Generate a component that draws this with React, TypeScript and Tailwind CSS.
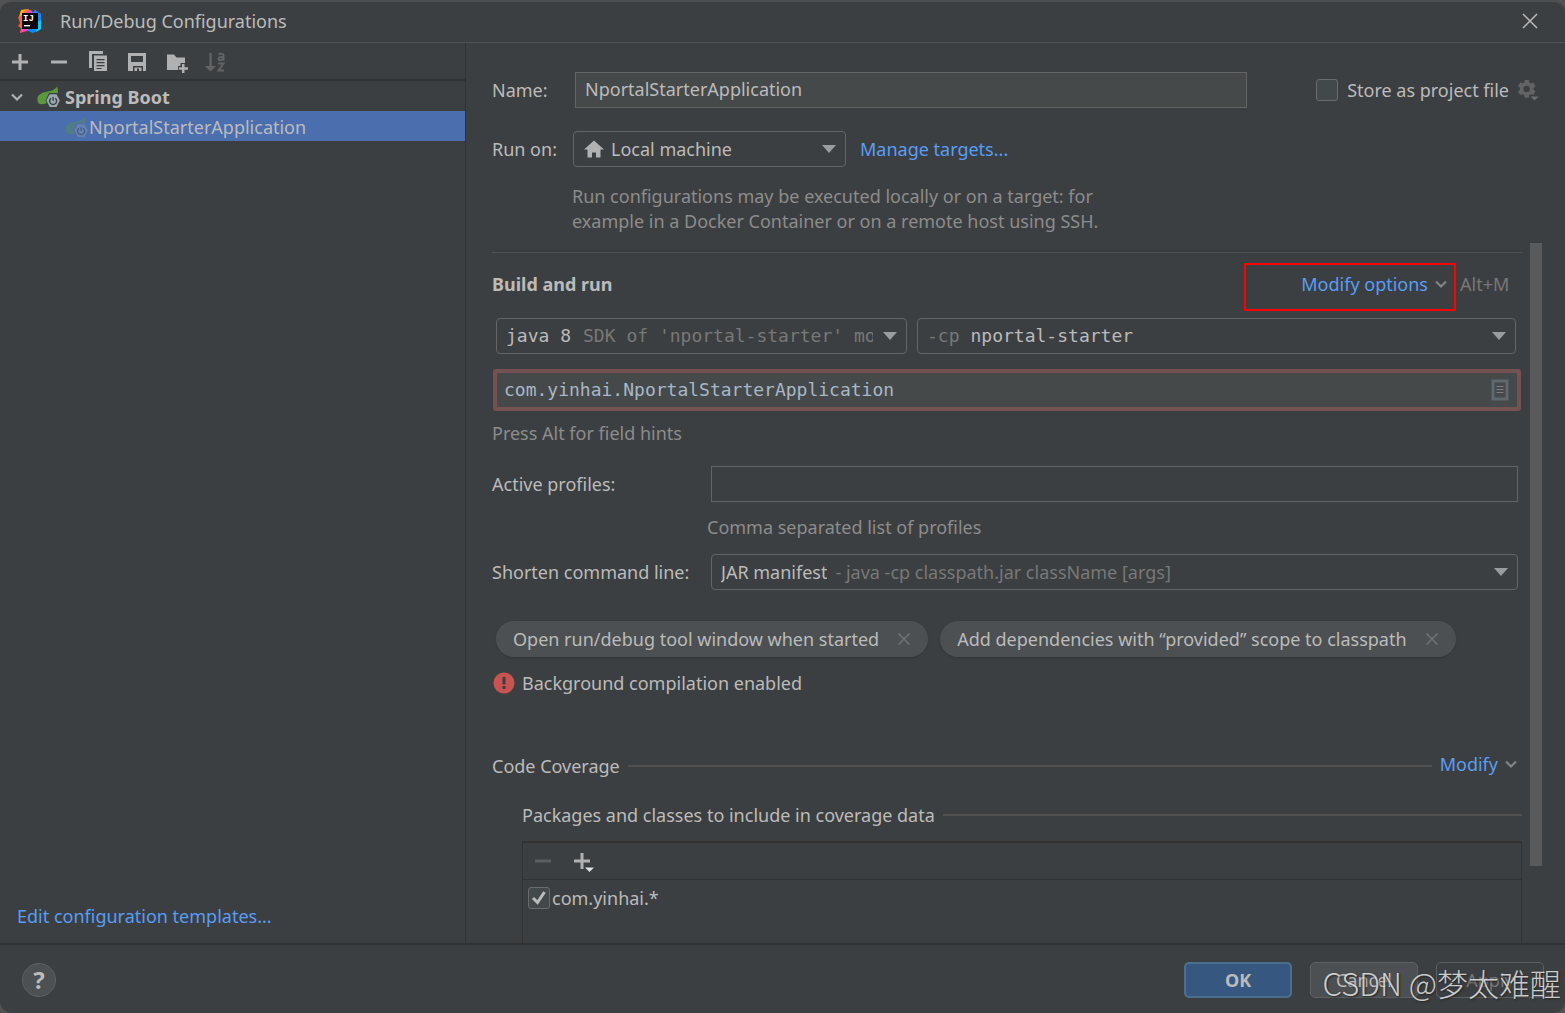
import type { ReactNode } from 'react';

interface IconProps {
  className?: string;
}

function AppLogo() {
  return (
    <svg viewBox="0 0 24 24" className="size-6" aria-hidden="true">
      <path d="M3 1l7-1 4 4-6 8-7-4z" fill="#fdb60d" />
      <path d="M0 8l8-4v16l-6 4 1-5-3-2 2-3z" fill="#fe5c3a" />
      <path d="M5 3l4-3 6 4 2 6-9 2z" fill="#fa6a4a" />
      <path d="M9 2l4-1 3 4-6 2z" fill="#e44fc0" />
      <path d="M14 4l3-3 6 4v15l-8 4-7-3 6-9z" fill="#078efc" />
      <path d="M15 4l2-3 6 4-3 6z" fill="#2f7df6" />
      <path d="M2 24l2-6h8l-3 4z" fill="#ff45a8" />
      <path d="M20 13l3-2v9l-5 3z" fill="#15c8fa" />
      <rect x="4" y="4" width="16" height="16" fill="#0b0508" />
      <text x="5" y="12" fill="#fff" fontSize="9" fontWeight="700" fontFamily="Liberation Mono, monospace">
        IJ
      </text>
      <rect x="6" y="16" width="6" height="1.4" fill="#fff" />
    </svg>
  );
}

function PlusIcon({ className = '' }: IconProps) {
  return (
    <svg viewBox="0 0 24 24" className={`size-6 ${className}`} fill="currentColor" aria-hidden="true">
      <path d="M10.500 4h3v6.500H20v3h-6.500V20h-3v-6.500H4v-3h6.500z" />
    </svg>
  );
}

function MinusIcon({ className = '' }: IconProps) {
  return (
    <svg viewBox="0 0 24 24" className={`size-6 ${className}`} fill="currentColor" aria-hidden="true">
      <path d="M4 10.500h16v3H4z" />
    </svg>
  );
}

function PlusMenuIcon() {
  return (
    <svg viewBox="0 0 24 24" className="size-6" fill="currentColor" aria-hidden="true">
      <path d="M9.500 4h3v6.500H19v3h-6.500V20h-3v-6.500H3v-3h6.500z" />
      <path d="M14 18.500h9l-4.500 4.500z" fill="#e0e0e0" />
    </svg>
  );
}

function CopyIcon() {
  return (
    <svg viewBox="0 0 24 24" className="size-6" fill="currentColor" aria-hidden="true">
      <path d="M3 1h14v3H6v14H3z" />
      <path
        fillRule="evenodd"
        d="M8 5.500h13V21H8zM10.500 9v1.200h8V9zm0 3v1.200h8V12zm0 3v1.200h8V15zm0 3v1h5v-1z"
      />
    </svg>
  );
}

function SaveIcon() {
  return (
    <svg viewBox="0 0 24 24" className="size-6" fill="currentColor" aria-hidden="true">
      <path fillRule="evenodd" d="M3 3h18v18h-3v-5H8v5H3zM6 6v6h12V6z" />
      <path d="M9.500 17.500h7V21H14v-2.500h-2V21H9.500z" />
    </svg>
  );
}

function FolderPlusIcon() {
  return (
    <svg viewBox="0 0 24 24" className="size-6" fill="currentColor" aria-hidden="true">
      <path d="M3 4.500h7l2.500 3H21V13h-4.500v3H14v4H3z" />
      <path d="M18 14h2.500v3.200H24v2.500h-3.500V23H18v-3.300h-3.200v-2.500H18z" />
    </svg>
  );
}

function SortIcon() {
  return (
    <svg viewBox="0 0 24 24" className="size-6" fill="currentColor" aria-hidden="true">
      <path d="M6.400 3h2.300v13h4.300l-5.500 5.500L2 16h4.400z" />
      <path
        d="M15.500 4.500c2-1.200 5-1 5 1.200v5M20.500 7c-3-.3-5 .3-5 2s3.500 1.800 5-.3M15 13.500h5.500l-5 7H21"
        fill="none"
        stroke="currentColor"
        strokeWidth="2"
      />
    </svg>
  );
}

function SpringIcon({ className = '' }: IconProps) {
  return (
    <svg viewBox="0 0 24 24" className={`size-6 shrink-0 ${className}`} aria-hidden="true">
      <path
        d="M21 1.500C19.500 4 17 5.500 12 6.500 5 7.500 1.300 10 1.300 14.500c0 3 1.700 4.700 4 4.700 3.500 0 5-.7 6.700-1.700l3-8.500 6.800-.5c.4-2.500 0-5-.8-7z"
        fill="#59983b"
      />
      <path d="M13 8h8.500l3.500 7.500-3.500 7.500H13l-3.500-7.500z" fill="#3c3f41" className="spring-gap" />
      <path d="M13.700 9.300h6.800l3.300 6.300-3.300 6.400h-6.800l-3.300-6.400z" fill="#9aa7b0" />
      <path d="M15 13.200a3.500 3.500 0 1 0 4.200 0M17.100 12v3.800" fill="none" stroke="#3c3f41" strokeWidth="1.400" />
    </svg>
  );
}

function ChevronIcon({ className = '' }: IconProps) {
  return (
    <svg viewBox="0 0 14 14" className={className} fill="none" stroke="currentColor" aria-hidden="true">
      <path d="M2 4.500l5 5 5-5" strokeWidth="2.200" />
    </svg>
  );
}

function HomeIcon() {
  return (
    <svg viewBox="0 0 22 20" className="h-5 w-[22px] shrink-0 text-[#afb1b3]" fill="currentColor" aria-hidden="true">
      <path d="M11 1.500l10 9h-3.500v8H13v-5H9v5H4.500v-8H1z" />
    </svg>
  );
}

function GearIcon() {
  return (
    <svg viewBox="0 0 22 22" className="size-[22px]" aria-hidden="true">
      <path
        fill="currentColor"
        fillRule="evenodd"
        d="M7.700 1h4.100l.5 2.600 1.600.9 2.500-.9 2.100 3.600-2 1.700v1.900l2 1.700-2.100 3.500-2.500-.8-1.600.9-.5 2.700H7.700l-.5-2.700-1.600-.9-2.500.8L1 12.500l2-1.700V8.900L1 7.200l2.100-3.600 2.500.9 1.600-.9zM9.700 6.700a3.200 3.200 0 1 0 0 6.400 3.200 3.200 0 0 0 0-6.400z"
      />
      <path d="M13.500 17.500h8l-4 4z" fill="#6e6e6e" />
    </svg>
  );
}

function ListIcon() {
  return (
    <svg viewBox="0 0 18 22" className="h-[22px] w-[18px]" fill="none" aria-hidden="true">
      <rect x="2" y="2" width="14" height="18" stroke="#5f686c" strokeWidth="3" />
      <path d="M5.500 7.500h7M5.500 10.500h7M5.500 13.500h7" stroke="#7b7f80" strokeWidth="1" />
    </svg>
  );
}

function ErrorIcon() {
  return (
    <svg viewBox="0 0 22 22" className="size-[22px]" aria-hidden="true">
      <circle cx="11" cy="11" r="10.500" fill="#c75450" />
      <path d="M9.500 5h3v7.500h-3zM9.500 14h3v3h-3z" fill="#3c3f41" />
    </svg>
  );
}

interface ComboBoxProps {
  label: string;
  value: string;
  icon?: ReactNode;
  before?: string;
  after?: string;
  className?: string;
}

// The select shows the value only, the muted parts sit beside it in the same frame
function ComboBox({ label, value, icon, before, after, className = '' }: ComboBoxProps) {
  return (
    <div className={`flex h-9 items-center rounded border border-[#646464] px-[9px] ${className}`}>
      {icon}
      {before && <span className="mr-[11px] text-[#787878]">{before}</span>}
      <select aria-label={label} className="field-sizing-content shrink-0 appearance-none bg-transparent outline-none">
        <option>{value}</option>
      </select>
      <span className="min-w-0 flex-1 overflow-hidden pl-3 whitespace-nowrap text-[#787878]">{after}</span>
      <svg viewBox="0 0 14 8" className="ml-2.5 h-2 w-3.5 shrink-0 text-[#9a9da0]" fill="currentColor" aria-hidden="true">
        <path d="M0 0h14L7 8z" />
      </svg>
    </div>
  );
}

function CheckBox({ id, checked = false }: { id: string; checked?: boolean }) {
  return (
    <span className="grid size-[22px] shrink-0">
      <input
        id={id}
        type="checkbox"
        defaultChecked={checked}
        className="peer col-start-1 row-start-1 size-[22px] appearance-none rounded-[3px] border border-[#6b6b6b] bg-[#43494a]"
      />
      <svg
        viewBox="0 0 22 22"
        className="pointer-events-none invisible col-start-1 row-start-1 size-[22px] peer-checked:visible"
        fill="none"
        stroke="#bbbbbb"
        strokeWidth="3"
        aria-hidden="true"
      >
        <path d="M5 11l4.500 4.500L16.500 5" />
      </svg>
    </span>
  );
}

function Chip({ children }: { children: ReactNode }) {
  return (
    <div className="flex h-9 items-center gap-[18px] rounded-full bg-[#4c5052] px-[17px] shadow-[0_1px_2px_#333638]">
      {children}
      <button type="button" aria-label="Remove option" className="text-[#6e7375]">
        <svg viewBox="0 0 14 14" className="size-3.5" stroke="currentColor" strokeWidth="1.500" aria-hidden="true">
          <path d="M1.500 1.500l11 11M12.500 1.500l-11 11" />
        </svg>
      </button>
    </div>
  );
}

function Toolbar() {
  return (
    <div className="flex h-[38px] items-center gap-[15px] border-b-2 border-[#323232] px-2 pt-0.5 text-[#afb1b3]">
      <button type="button" aria-label="Add"><PlusIcon /></button>
      <button type="button" aria-label="Remove"><MinusIcon /></button>
      <button type="button" aria-label="Copy"><CopyIcon /></button>
      <button type="button" aria-label="Save"><SaveIcon /></button>
      <button type="button" aria-label="New folder"><FolderPlusIcon /></button>
      <button type="button" aria-label="Sort" disabled className="text-[#616364]"><SortIcon /></button>
    </div>
  );
}

function Sidebar() {
  return (
    <aside className="flex w-[466px] shrink-0 flex-col border-r border-[#323232]">
      <Toolbar />
      <div className="flex h-[30px] items-center pt-px pl-2.5 font-bold">
        <button type="button" aria-label="Collapse" className="mr-3">
          <ChevronIcon className="size-3.5 text-[#afb1b3]" />
        </button>
        <SpringIcon className="mr-[5px]" />
        Spring Boot
      </div>
      <div className="flex h-[30px] items-center bg-[#4b6eaf] pt-px pl-16">
        <SpringIcon className="mr-px opacity-35 [&_.spring-gap]:fill-[#4b6eaf]" />
        NportalStarterApplication
      </div>
      <a href="#templates" className="mt-auto mb-[15px] self-start pl-[17px] text-[#589df6]">
        Edit configuration templates...
      </a>
    </aside>
  );
}

function CodeCoverage() {
  return (
    <section className="flex flex-1 flex-col pt-[57px]">
      <div className="flex items-center">
        <h2>Code Coverage</h2>
        <div className="mx-2 h-0.5 flex-1 bg-[#515151]" />
        <button type="button" className="flex items-center gap-1.5 pr-1 pb-1 text-[#589df6]">
          Modify
          <ChevronIcon className="size-3.5 text-[#7f8488]" />
        </button>
      </div>
      <div className="mt-[23px] flex items-center gap-2 pl-[30px]">
        <h3>Packages and classes to include in coverage data</h3>
        <div className="h-0.5 flex-1 bg-[#515151]" />
      </div>
      <div className="mt-3.5 ml-[30px] flex-1 border-x border-t-2 border-[#323232]">
        <div className="flex h-[37px] items-center gap-4 border-b border-[#323232] px-2 text-[#afb1b3]">
          <button type="button" aria-label="Remove package" disabled className="text-[#5c5e60]"><MinusIcon /></button>
          <button type="button" aria-label="Add package"><PlusMenuIcon /></button>
        </div>
        <div className="flex h-9 items-center gap-0.5 pl-[5px]">
          <CheckBox id="pattern" checked />
          <label htmlFor="pattern">com.yinhai.*</label>
        </div>
      </div>
    </section>
  );
}

function BuildAndRun() {
  return (
    <div className="mt-[9px] flex min-w-0 flex-1 flex-col border-t border-[#515151]">
      <div className="mt-[19px] flex items-center pr-1.5">
        <h2 className="font-bold">Build and run</h2>
        <div className="relative ml-auto">
          <button type="button" className="flex items-center gap-1.5 text-[#589df6]">
            Modify options
            <ChevronIcon className="size-3.5 text-[#7f8488]" />
          </button>
          <div className="pointer-events-none absolute -top-[9px] -right-2 -bottom-[15px] -left-[57px] border-2 border-[#ff0000]" />
        </div>
        <span className="ml-3 w-14 text-[#787878]">Alt+M</span>
      </div>

      <div className="mt-[22px] flex gap-2.5 pr-1.5 pl-1 font-['DejaVu_Sans_Mono',monospace]">
        <ComboBox label="JRE" value="java 8" after="SDK of 'nportal-starter' module" className="w-[411px] shrink-0" />
        <ComboBox label="Classpath of module" before="-cp" value="nportal-starter" className="min-w-0 flex-1" />
      </div>
      <div className="mt-[15px] mr-px ml-px flex h-[42px] items-center rounded-[3px] border-4 border-[#745252] bg-[#45494a] pr-2 pl-[7px]">
        <input
          aria-label="Main class"
          defaultValue="com.yinhai.NportalStarterApplication"
          spellCheck={false}
          className="min-w-0 flex-1 bg-transparent font-['DejaVu_Sans_Mono',monospace] text-[#a9b7c6] outline-none"
        />
        <button type="button" aria-label="Browse classes"><ListIcon /></button>
      </div>
      <p className="mt-2.5 text-[#8c8c8c]">Press Alt for field hints</p>

      <div className="mt-[21px] grid grid-cols-[219px_1fr] items-center pr-1">
        <label htmlFor="profiles">Active profiles:</label>
        <input id="profiles" className="h-9 min-w-0 border border-[#646464] bg-transparent px-2 outline-none" />
        <p className="col-start-2 -ml-1 mt-[13px] text-[#8c8c8c]">Comma separated list of profiles</p>
        <span className="mt-[15px]">Shorten command line:</span>
        <ComboBox
          label="Shorten command line"
          value="JAR manifest"
          after="- java -cp classpath.jar className [args]"
          className="mt-[15px] [&>span]:pl-2"
        />
      </div>

      <div className="mt-[31px] flex gap-3 pl-1">
        <Chip>Open run/debug tool window when started</Chip>
        <Chip>Add dependencies with “provided” scope to classpath</Chip>
      </div>
      <p className="mt-3.5 flex items-center gap-[7px] pl-px">
        <ErrorIcon />
        Background compilation enabled
      </p>
      <CodeCoverage />
    </div>
  );
}

function Settings() {
  return (
    <main className="flex min-w-0 flex-1 flex-col pl-[26px]">
      <div className="pt-[29px] pr-[26px] pb-[9px]">
        <div className="flex items-center">
          <label htmlFor="name" className="w-[83px]">Name:</label>
          <input
            id="name"
            defaultValue="NportalStarterApplication"
            spellCheck={false}
            className="h-9 min-w-0 flex-1 border border-[#646464] bg-[#45494a] px-[9px] pb-0.5 outline-none"
          />
          <div className="ml-[69px] flex items-center gap-[9px]">
            <CheckBox id="store" />
            <label htmlFor="store">Store as project file</label>
          </div>
          <button type="button" aria-label="Storage options" className="ml-2 text-[#616364]"><GearIcon /></button>
        </div>
        <div className="mt-[23px] flex items-center">
          <span className="w-[81px]">Run on:</span>
          <ComboBox
            label="Run on"
            value="Local machine"
            icon={<span className="mr-1.5"><HomeIcon /></span>}
            className="w-[273px]"
          />
          <a href="#targets" className="ml-3.5 text-[#589df6]">Manage targets...</a>
        </div>
        <p className="mt-[17px] ml-20 leading-[25px] text-[#8c8c8c]">
          Run configurations may be executed locally or on a target: for
          <br />
          example in a Docker Container or on a remote host using SSH.
        </p>
      </div>
      <div className="flex flex-1 gap-2 pr-[23px]">
        <BuildAndRun />
        <div className="flex w-3">
          <div className="h-[89%] w-full bg-[#595a5c]" />
        </div>
      </div>
    </main>
  );
}

export default function App() {
  return (
    <div className="bg-[#505253] font-['Noto_Sans','Noto_Sans_CJK_SC',sans-serif] text-lg/6 text-[#bbbbbb]">
      <div className="relative flex min-h-screen flex-col overflow-hidden rounded-xl border-t-2 border-[#4d4f50] bg-[#3c3f41]">
        <header className="flex h-[41px] items-center border-b border-[#4f5153] pr-[26px] pb-0.5 pl-[18px]">
          <AppLogo />
          <h1 className="ml-[18px]">Run/Debug Configurations</h1>
          <button type="button" aria-label="Close" className="ml-auto">
            <svg viewBox="0 0 18 18" className="size-[18px]" stroke="#bbbbbb" strokeWidth="1.500" aria-hidden="true">
              <path d="M2 2l14 14M16 2L2 16" />
            </svg>
          </button>
        </header>

        <div className="flex flex-1">
          <Sidebar />
          <Settings />
        </div>

        <footer className="flex h-[70px] items-center gap-[18px] border-t-2 border-[#323232] pt-px pr-[21px] pl-[22px]">
          <button
            type="button"
            aria-label="Help"
            className="mr-auto size-[34px] rounded-full border border-[#5e6060] bg-[#4c5052] text-2xl/8 font-bold"
          >
            ?
          </button>
          <button type="button" className="h-9 w-[108px] rounded-[5px] border-2 border-[#4c708c] bg-[#365880] font-bold">
            OK
          </button>
          <button type="button" className="h-9 w-[108px] rounded-[5px] border border-[#5e6060] bg-[#4c5052]">
            Cancel
          </button>
          <button type="button" disabled className="h-9 w-[108px] rounded-[5px] border border-[#5e6060] text-[#777777]">
            Apply
          </button>
        </footer>

        <div className="pointer-events-none absolute right-1 bottom-2 font-['Noto_Sans_CJK_SC',sans-serif] text-[31px]/[44px] font-light whitespace-nowrap text-white/75 [text-shadow:1px_1px_2px_#222]">
          CSDN @梦太难醒
        </div>
      </div>
    </div>
  );
}
